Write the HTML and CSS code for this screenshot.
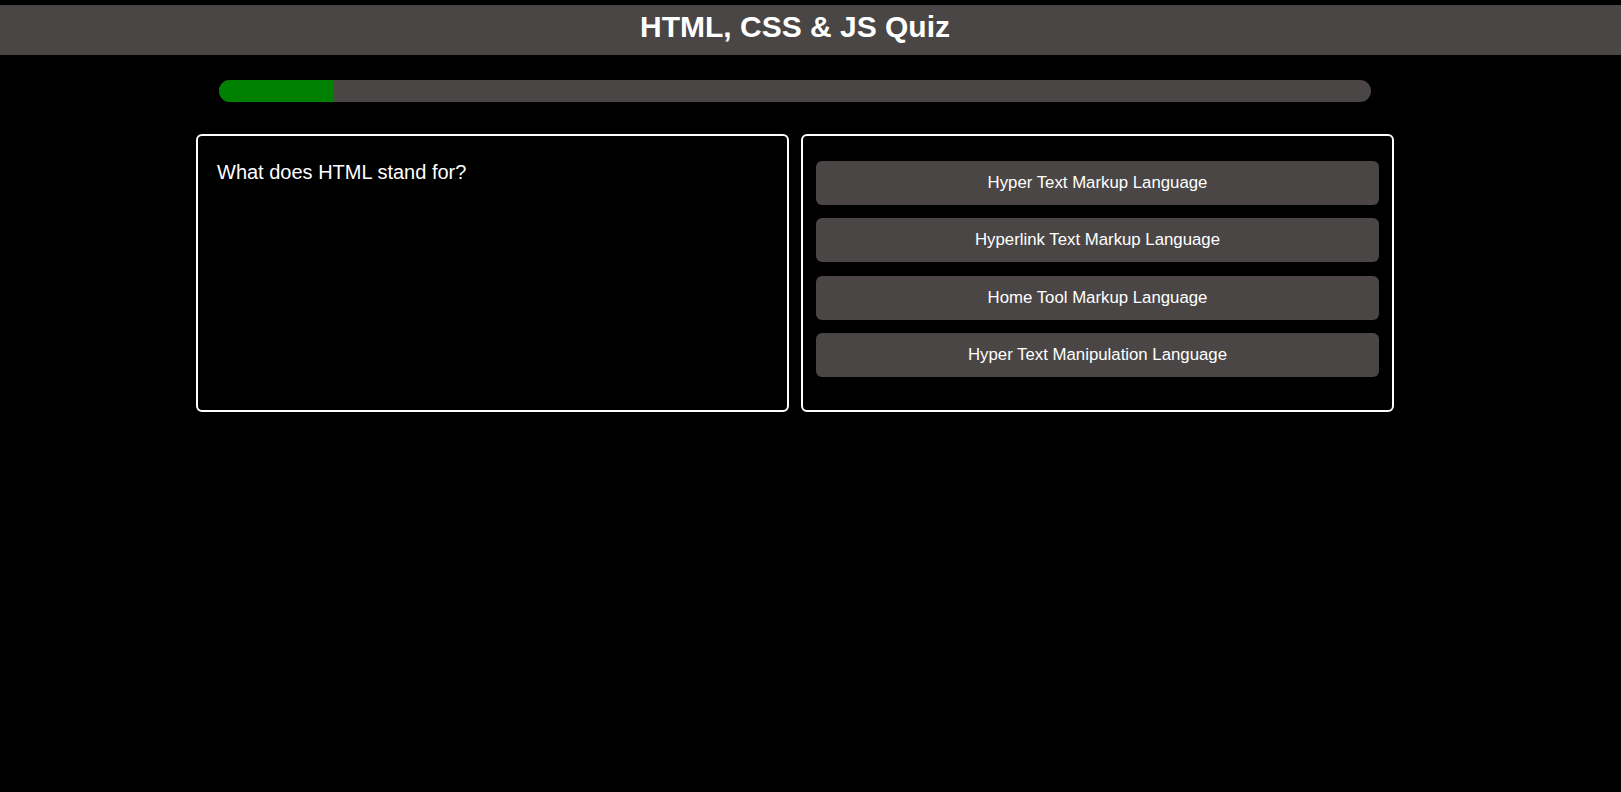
FILE: index.html
```html
<!DOCTYPE html>
<html lang="en">
<head>
<meta charset="utf-8">
<title>HTML, CSS &amp; JS Quiz</title>
<link rel="stylesheet" href="styles.css">
</head>
<body>
<header class="site-header">
  <h1 class="title">HTML, CSS &amp; JS Quiz</h1>
</header>
<main class="quiz">
  <div class="progress"><div class="progress-fill" style="width: 10%"></div></div>
  <div class="panels">
    <section class="panel question-panel">
      <p class="question">What does HTML stand for?</p>
    </section>
    <section class="panel answers-panel">
      <button class="answer">Hyper Text Markup Language</button>
      <button class="answer">Hyperlink Text Markup Language</button>
      <button class="answer">Home Tool Markup Language</button>
      <button class="answer">Hyper Text Manipulation Language</button>
    </section>
  </div>
</main>
</body>
</html>
```

FILE: styles.css
```css
* { box-sizing: border-box; }

html, body {
  margin: 0;
  padding: 0;
  background: #000;
  color: #fff;
  font-family: "Liberation Sans", Arial, sans-serif;
}

body {
  padding-top: 5px;
}

.site-header {
  background: #4a4645;
  height: 50px;
  padding: 5px 31px 0 0;
  text-align: center;
}

.title {
  margin: 0;
  font-size: 30px;
  font-weight: bold;
  line-height: 34px;
}

.quiz {
  width: 1198px;
  margin-left: 196px;
  padding-top: 25px;
}

.progress {
  margin: 0 23px;
  height: 22px;
  border-radius: 11px;
  background: #4a4645;
  overflow: hidden;
}

.progress-fill {
  height: 100%;
  background: #008000;
}

.panels {
  margin-top: 32px;
  display: grid;
  grid-template-columns: 1fr 1fr;
  gap: 12px;
}

.panel {
  border: 2px solid #fff;
  border-radius: 6px;
}

.question-panel {
  padding: 25px 19px;
}

.question {
  margin: 0;
  font-size: 20px;
  line-height: 23px;
}

.answers-panel {
  display: flex;
  flex-direction: column;
  gap: 13.4px;
  padding: 25px 13px 33px 13px;
}

.answer {
  display: block;
  width: 100%;
  border: none;
  border-radius: 6px;
  background: #4a4645;
  color: #fff;
  font-family: "Liberation Sans", Arial, sans-serif;
  font-size: 16.8px;
  line-height: 20px;
  padding: 12px 10px;
  text-align: center;
  cursor: pointer;
}
```
